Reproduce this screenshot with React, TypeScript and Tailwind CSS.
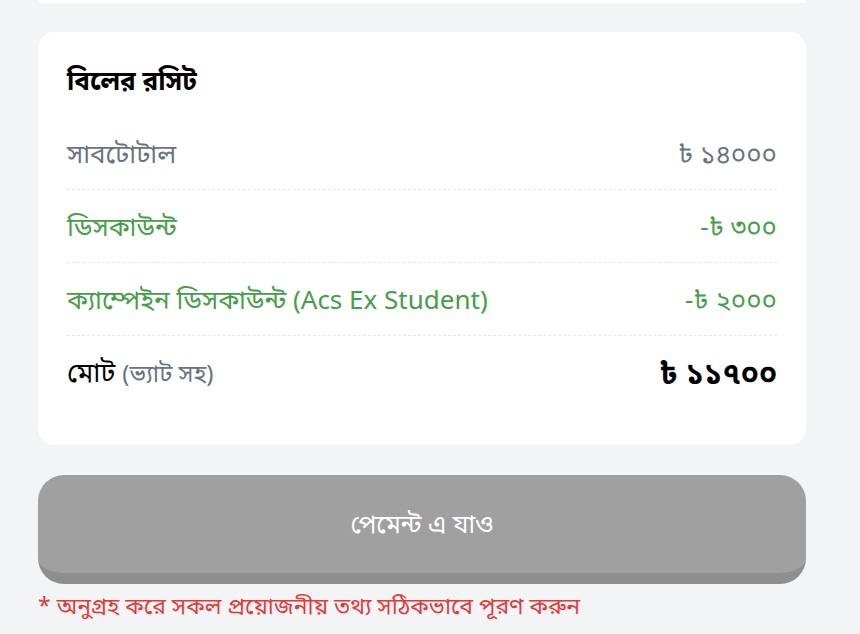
const rows = [
  { label: "সাবটোটাল", amount: "৳ ১৪০০০", tone: "text-[#6b7280]" },
  { label: "ডিসকাউন্ট", amount: "-৳ ৩০০", tone: "text-[#43a047]" },
  { label: "ক্যাম্পেইন ডিসকাউন্ট (Acs Ex Student)", amount: "-৳ ২০০০", tone: "text-[#43a047]" },
];

export default function App() {
  return (
    <div className="min-h-[634px] bg-[#f3f4f6] pl-[38px] pr-[54px] font-['Noto_Sans','Noto_Sans_Bengali',sans-serif]">
      {/* tail of the card above */}
      <div className="h-[3px] rounded-b-2xl bg-white" />

      <div className="mt-[29px] rounded-2xl bg-white px-[29px] pt-[30px] pb-[37px]">
        <h2 className="mb-[19px] text-[26px] font-bold leading-[36px] text-black">বিলের রসিট</h2>

        {rows.map((row) => (
          <div
            key={row.label}
            className={`flex h-[73px] items-center justify-between border-b border-dashed border-[#e5e7eb] text-[26px] ${row.tone}`}
          >
            <span>{row.label}</span>
            <span>{row.amount}</span>
          </div>
        ))}

        <div className="flex h-[72px] items-center justify-between">
          <span className="text-[27px] text-black">
            মোট <span className="text-[24px] text-[#6b7280]">(ভ্যাট সহ)</span>
          </span>
          <span className="text-[30px] font-bold text-black">৳ ১১৭০০</span>
        </div>
      </div>

      <button
        type="button"
        className="mt-[30px] flex h-[109px] w-full items-center justify-center rounded-[26px] border-b-[11px] border-[#8e8e8e] bg-[#a0a0a0] text-[25px] text-white"
      >
        পেমেন্ট এ যাও
      </button>

      <p className="mt-[5px] text-[23px] leading-[32px] text-[#e53935]">* অনুগ্রহ করে সকল প্রয়োজনীয় তথ্য সঠিকভাবে পূরণ করুন</p>
    </div>
  );
}
